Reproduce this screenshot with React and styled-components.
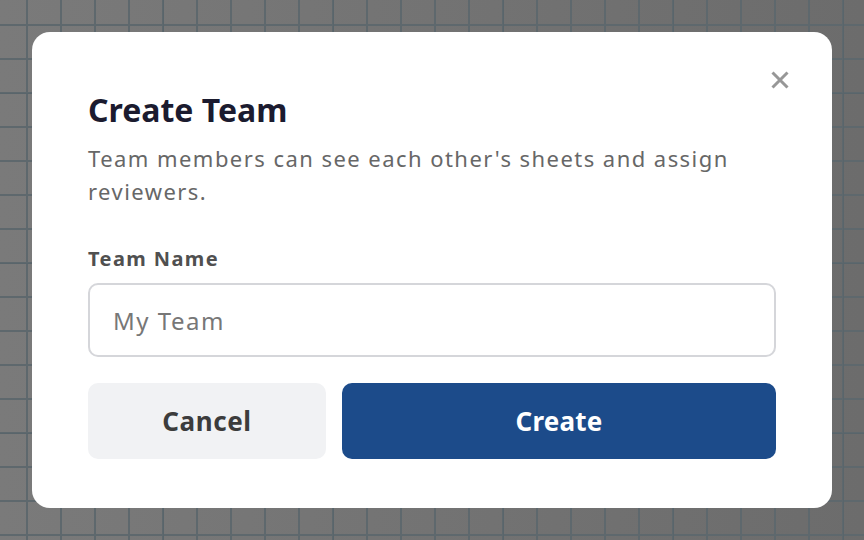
import styled, { createGlobalStyle } from "styled-components";

const GlobalStyle = createGlobalStyle`
  html, body {
    margin: 0;
    padding: 0;
  }
  body {
    font-family: "Noto Sans", "Open Sans", Arial, sans-serif;
  }
  * {
    box-sizing: border-box;
  }
`;

// dimmed workspace behind the dialog: minor grid every 34px, heavier line every 170px
const Backdrop = styled.div`
  width: 864px;
  height: 540px;
  display: flex;
  align-items: center;
  justify-content: center;
  background-color: #727272;
  background-image:
    linear-gradient(to right, #59656b 1px, transparent 1px),
    linear-gradient(to bottom, #59656b 1px, transparent 1px),
    linear-gradient(to right, #5e686d 2px, transparent 2px),
    linear-gradient(to bottom, #5e686d 2px, transparent 2px),
    linear-gradient(to right, #7a7a7a, #6c6c6c);
  background-size: 170px 170px, 170px 170px, 34px 34px, 34px 34px, 100% 100%;
  background-position: 163px 0, 0 93px, 26px 0, 0 24px, 0 0;
`;

const Dialog = styled.div`
  position: relative;
  width: 800px;
  height: 476px;
  background: #fff;
  border-radius: 18px;
  padding: 58px 56px 48px;
  display: flex;
  flex-direction: column;
`;

const CloseButton = styled.button`
  position: absolute;
  top: 38px;
  right: 42px;
  width: 20px;
  height: 20px;
  padding: 0;
  border: none;
  background: none;
  color: #979797;
  cursor: pointer;
  display: flex;
  align-items: center;
  justify-content: center;
`;

const Title = styled.h2`
  margin: 0;
  font-size: 32px;
  line-height: 40px;
  font-weight: 700;
  color: #1b1b2f;
`;

const Description = styled.p`
  margin: 12px 0 0;
  font-size: 22px;
  line-height: 33px;
  letter-spacing: 1.45px;
  color: #676767;
`;

const Label = styled.label`
  display: block;
  margin-top: 37px;
  font-size: 20px;
  line-height: 28px;
  font-weight: 700;
  letter-spacing: 1.4px;
  color: #505050;
`;

const Input = styled.input`
  margin-top: 10px;
  width: 100%;
  height: 74px;
  border: 2px solid #d5d6da;
  border-radius: 10px;
  padding: 0 23px;
  font-family: inherit;
  font-size: 24px;
  letter-spacing: 1.5px;
  color: #333;
  outline: none;
  &::placeholder {
    color: #777;
  }
`;

const Actions = styled.div`
  display: flex;
  gap: 16px;
  margin-top: 26px;
`;

const Button = styled.button`
  height: 76px;
  border: none;
  border-radius: 10px;
  font-family: inherit;
  font-size: 26px;
  font-weight: 700;
  cursor: pointer;
  flex: ${(p) => (p.$primary ? "1" : "0 0 238px")};
  letter-spacing: ${(p) => (p.$primary ? "0.2px" : "0.6px")};
  background: ${(p) => (p.$primary ? "#1c4b8a" : "#f1f2f4")};
  color: ${(p) => (p.$primary ? "#fff" : "#3c3c3c")};
`;

export default function App() {
  return (
    <>
      <GlobalStyle />
      <Backdrop>
        <Dialog>
          <CloseButton aria-label="Close">
            <svg width="20" height="20" viewBox="0 0 20 20">
              <path
                d="M2.5 2.5 L17.5 17.5 M17.5 2.5 L2.5 17.5"
                stroke="currentColor"
                strokeWidth="3"
              />
            </svg>
          </CloseButton>
          <Title>Create Team</Title>
          <Description>
            Team members can see each other's sheets and assign reviewers.
          </Description>
          <Label htmlFor="team-name">Team Name</Label>
          <Input id="team-name" placeholder="My Team" />
          <Actions>
            <Button>Cancel</Button>
            <Button $primary>Create</Button>
          </Actions>
        </Dialog>
      </Backdrop>
    </>
  );
}
